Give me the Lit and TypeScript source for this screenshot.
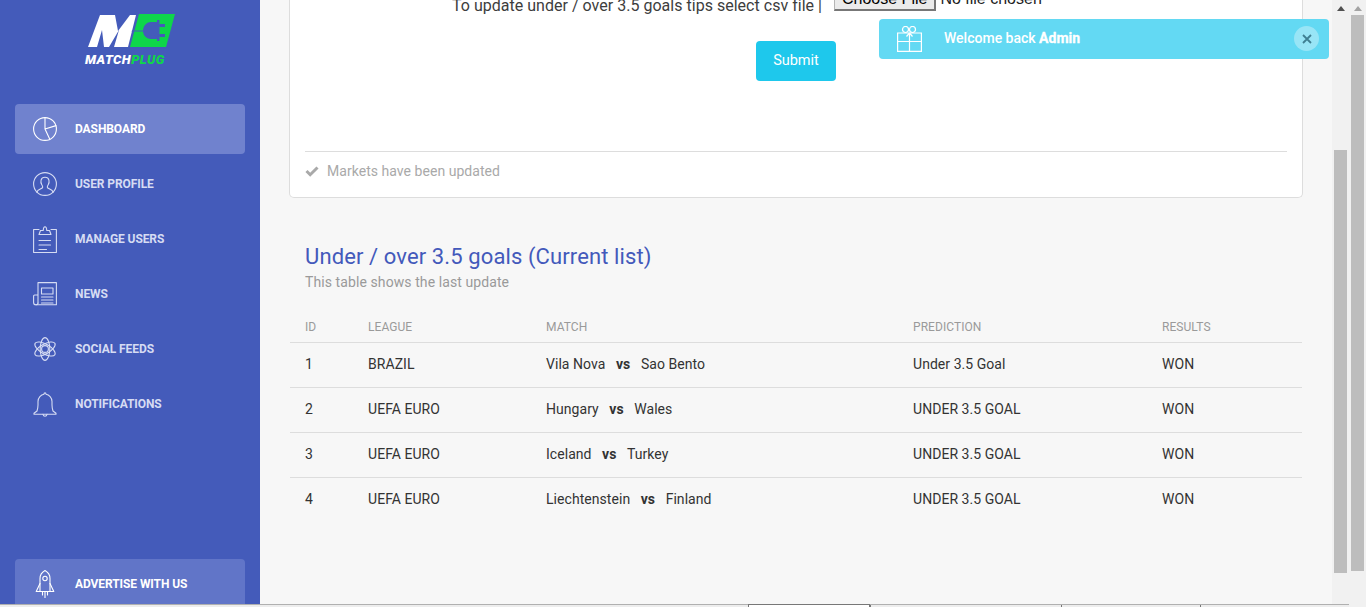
import { LitElement, html, css, svg } from "lit";
import { customElement } from "lit/decorators.js";

const s = (body: unknown, h = 24) => html`<svg class="ico" viewBox="0 0 24 ${h}" height=${h} fill="none" stroke="currentColor" stroke-width="1.1" stroke-linejoin="round" stroke-linecap="round">${body}</svg>`;

const ICONS: Record<string, unknown> = {
  pie: s(svg`<circle cx="12" cy="12" r="11.400"/><path d="M12 .6V12l4.800 10.200M12 12l11-3.400"/>`),
  user: s(svg`<circle cx="12" cy="12" r="11.400"/><path d="M3.800 20.200c1-2.800 4.400-3 5.800-4.600.3-.9 0-1.600-.8-2.800-1.500-2.300-1.500-7.500 3.200-7.500s4.700 5.200 3.200 7.500c-.8 1.200-1.100 1.900-.8 2.800 1.400 1.600 4.800 1.800 5.800 4.600"/>`),
  clip: s(svg`<path d="M6 3.500H.6v23h22.800v-23H18"/><path d="M6 8.500l1.500-4h2.700c.3-5 3.300-5 3.600 0h2.700l1.500 4z"/><path d="M6 14.500h11.500M6 19h11.500M6 23.500h7.500"/>`, 27),
  news: s(svg`<path d="M5 21V.6h18.400v22.200H2.800C1.200 22.800.6 22 .6 20.500V14c0-.6.4-1 1-1H5"/><path d="M8.500 6h11.500v6H8.500zM8.500 15h11.500M8.500 18h11.500M8.500 21h11.500M5 21c0 1-1 1.800-2.200 1.800"/>`),
  atom: s(svg`<circle cx="12" cy="12" r="3.400"/><ellipse cx="12" cy="12" rx="11.400" ry="4.800" transform="rotate(30 12 12)"/><ellipse cx="12" cy="12" rx="11.400" ry="4.800" transform="rotate(-30 12 12)"/><ellipse cx="12" cy="12" rx="4.800" ry="11.400"/>`),
  bell: s(svg`<path d="M4 19c.6-2 1-3.400 1-6V9.500c0-4 3-6.800 6-7.300 0-1.800 2-1.800 2 0 3 .5 6 3.300 6 7.300V13c0 2.600.4 4 1 6l3 2.300v1H1v-1z"/><path d="M10 22.300c.5 2.500 3.500 2.500 4 0"/>`, 25),
  rocket: s(svg`<path d="M7 21.500V8.500C7 5 9.500 2 12 .6c2.500 1.400 5 4.400 5 7.900v13z"/><circle cx="12" cy="8.500" r="2.200"/><path d="M7 13.500L3.200 21.500H7M17 13.500l3.800 8H17M9.500 22v3M14.500 22v3M12 22v6"/>`, 28),
};

const NAV = [
  { label: "Dashboard", icon: "pie", active: true },
  { label: "User Profile", icon: "user" },
  { label: "Manage Users", icon: "clip" },
  { label: "News", icon: "news" },
  { label: "Social Feeds", icon: "atom" },
  { label: "Notifications", icon: "bell" },
];

const ROWS = [
  ["1", "BRAZIL", "Vila Nova", "Sao Bento", "Under 3.5 Goal", "WON"],
  ["2", "UEFA EURO", "Hungary", "Wales", "UNDER 3.5 GOAL", "WON"],
  ["3", "UEFA EURO", "Iceland", "Turkey", "UNDER 3.5 GOAL", "WON"],
  ["4", "UEFA EURO", "Liechtenstein", "Finland", "UNDER 3.5 GOAL", "WON"],
];

@customElement("app-root")
export class AppRoot extends LitElement {
  static styles = css`
    :host { display: block; width: 1366px; height: 607px; overflow: hidden; position: relative; font-family: Roboto, "Liberation Sans", sans-serif; background: #ededed; }
    * { box-sizing: border-box; }
    .frame { display: flex; height: 607px; }
    .left { width: 1349px; height: 607px; display: flex; flex-direction: column; }
    .view { display: flex; height: 604px; flex: none; overflow: hidden; }
    .sidebar { width: 260px; flex: none; background: #445bba; padding: 14px 15px 0; display: flex; flex-direction: column; overflow: hidden; }
    .logo { display: block; height: 52px; margin-left: 70px; }
    .logo svg { display: block; width: 90px; height: 33px; }
    .logo span { display: block; margin-top: 6px; font: italic 900 13px/14px Roboto, sans-serif; letter-spacing: 0.45px; color: #fff; }
    .logo span b { color: #0fd64a; font-weight: 900; }
    nav { margin-top: 38px; display: flex; flex-direction: column; gap: 5px; flex: 1; }
    .item { height: 50px; display: flex; align-items: center; gap: 18px; padding-left: 18px; border-radius: 4px; color: #d6dcf3; font-size: 12px; font-weight: 700; letter-spacing: -0.08px; text-transform: uppercase; flex: none; }
    .item.active { background: #7082ce; color: #fff; }
    .item.ad { background: #6175c8; color: #fff; margin-top: auto; margin-bottom: -5px; }
    .ico { width: 24px; flex: none; display: block; }
    .main { flex: 1; background: #f7f7f7; overflow: hidden; min-width: 0; }
    .inner { margin-top: -21px; padding: 0 30px; }
    .card { width: 1014px; margin-left: -1px; background: #fff; border: 1px solid #ddd; border-top: 0; border-radius: 0 0 5px 5px; padding: 9px 15px 0; height: 219px; display: flex; flex-direction: column; }
    .upload { font-size: 16px; color: #3d3d3d; text-align: center; line-height: 19px; height: 19px; white-space: nowrap; letter-spacing: 0.02px; }
    .upload input { font: 16px "Liberation Sans", Arial, sans-serif; margin-left: 8px; vertical-align: 7px; width: 306px; color: #222; letter-spacing: 0; }
    .upload input::file-selector-button { border-style: solid; border-width: 1px 2px 2px 1px; border-color: #b5b5b5 #777 #777 #b5b5b5; background: #ebebeb; border-radius: 0; padding: 1px 7px; margin-right: 4px; font: inherit; }
    .submit-wrap { display: flex; justify-content: center; margin-top: 34px; }
    .submit { width: 80px; height: 40px; border: 0; border-radius: 4px; background: #1ec8ec; color: #fff; font: 400 14.5px Roboto, sans-serif; padding: 0 0 2px; }
    .foot { margin-top: 70px; border-top: 1px solid #ddd; padding-top: 9px; color: #a9a9a9; font-size: 14px; line-height: 20px; display: flex; align-items: center; gap: 8px; letter-spacing: 0.04px; }
    .foot svg { width: 14px; height: 14px; display: block; }
    .head { padding: 45px 0 0 15px; }
    h2 { margin: 0; font-size: 22px; font-weight: 400; line-height: 28px; color: #4359bb; letter-spacing: 0.11px; }
    .sub { margin: 1px 0 0; font-size: 14px; line-height: 20px; color: #9a9a9a; letter-spacing: 0.09px; }
    table { width: 1012px; margin-top: 16px; border-collapse: collapse; table-layout: fixed; font-size: 14px; color: #333; letter-spacing: 0.05px; }
    th { font-size: 12px; font-weight: 400; text-transform: uppercase; color: #9a9a9a; text-align: left; padding: 4px 0 0 15px; height: 34px; border-bottom: 1px solid #ddd; line-height: 14px; letter-spacing: 0.06px; }
    td { padding: 0 0 2px 15px; height: 45px; border-bottom: 1px solid #ddd; }
    tr:last-child td { border-bottom: 0; }
    td b { font-weight: 700; margin: 0 7px; }
    .bar { width: 17px; flex: none; background: #f1f1f1; display: flex; flex-direction: column; align-items: center; }
    .bar.outer { height: 607px; }
    .arrow { width: 0; height: 0; border: 4px solid transparent; border-top: 0; border-bottom: 5px solid #505050; margin-top: 6px; flex: none; }
    .arrow.dim { border-bottom-color: #a3a3a3; }
    .thumb { width: 13px; margin-top: 139px; height: 423px; background: #bdbdbd; flex: none; }
    .outer .thumb { margin-top: 4px; height: 556px; }
    .status { height: 3px; flex: none; background: #ededed; display: flex; padding-left: 748px; border-top: 1px solid #b0b0b0; }
    .tab { height: 2px; flex: none; border-left: 1px solid #777; }
    .tab.first { width: 122px; background: #fff; border-right: 1px solid #777; border-top: 1px solid #777; margin-top: -1px; height: 3px; }
    .tab.b { width: 191px; }
    .tab.c { width: 139px; }
    .toast { position: absolute; left: 879px; top: 19px; width: 450px; height: 40px; border-radius: 4px; background: #63d9f3; color: #fff; display: flex; align-items: center; font-size: 14px; font-weight: 500; padding-left: 18px; }
    .toast .gift { width: 25px; height: 26px; display: block; flex: none; margin-right: 22px; }
    .toast span { margin-top: -2px; }
    .toast b { font-weight: 700; -webkit-text-stroke: 0.3px #fff; }
    .close { position: absolute; left: 415px; top: 7px; width: 25px; height: 25px; border-radius: 50%; background: #98e5f6; display: flex; align-items: center; justify-content: center; }
    .close svg { width: 10px; height: 10px; display: block; }
  `;

  render() {
    return html`
      <div class="frame">
        <div class="left">
          <div class="view">
            <aside class="sidebar">
              <div class="logo">
                <svg viewBox="0 0 90 33">
                  <polygon fill="#fff" points="3,33 15,1 30,1 33,17 45,1 51,1 43,33 29,33 34,16 24,33 19,33 17,16 12,33"/>
                  <polygon fill="#0fd64a" points="54,0 90,0 81,33 45,33"/>
                  <path fill="#445bba" d="M47 16.500h11c.3-4 3-8.500 8-8.500h6V6h2.500v4H80v3h-5.500v7H80v3h-5.500v4H72v-2h-6c-5 0-7.700-4-8-7.500H46.500z"/>
                </svg>
                <span>MATCH<b>PLUG</b></span>
              </div>
              <nav>
                ${NAV.map((n) => html`<div class="item ${n.active ? "active" : ""}">${ICONS[n.icon]}<span>${n.label}</span></div>`)}
                <div class="item ad">${ICONS.rocket}<span>Advertise with us</span></div>
              </nav>
            </aside>
            <main class="main">
              <div class="inner">
                <section class="card">
                  <div class="upload">To update under / over 3.5 goals tips select csv file | <input type="file" /></div>
                  <div class="submit-wrap"><button class="submit">Submit</button></div>
                  <div class="foot">
                    <svg viewBox="0 0 14 14"><path fill="none" stroke="#a9a9a9" stroke-width="3" d="M1.500 7l3.700 3.700L12.500 3.500"/></svg>
                    <span>Markets have been updated</span>
                  </div>
                </section>
                <div class="head">
                  <h2>Under / over 3.5 goals (Current list)</h2>
                  <p class="sub">This table shows the last update</p>
                </div>
                <table>
                  <colgroup><col style="width:63px" /><col style="width:178px" /><col style="width:367px" /><col style="width:249px" /><col /></colgroup>
                  <thead><tr><th>ID</th><th>League</th><th>Match</th><th>Prediction</th><th>Results</th></tr></thead>
                  <tbody>
                    ${ROWS.map((r) => html`<tr><td>${r[0]}</td><td>${r[1]}</td><td>${r[2]}<b>&nbsp;vs&nbsp;</b>${r[3]}</td><td>${r[4]}</td><td>${r[5]}</td></tr>`)}
                  </tbody>
                </table>
              </div>
            </main>
            <div class="bar"><div class="arrow"></div><div class="thumb"></div></div>
          </div>
          <div class="status"><div class="tab first"></div><div class="tab b"></div><div class="tab c"></div><div class="tab"></div></div>
        </div>
        <div class="bar outer"><div class="arrow dim"></div><div class="thumb"></div></div>
      </div>
      <div class="toast">
        <svg class="gift" viewBox="0 0 25 26" fill="none" stroke="#fff" stroke-width="1.200"><path d="M.6 7h23.800v18.400H.6zM12.500 7v18.400M.6 15.500h23.800"/><circle cx="8.500" cy="3.500" r="3"/><circle cx="15.500" cy="3.500" r="3"/><path d="M12.500 7l-3 3.500M12.500 7l3 3.500"/></svg>
        <span>Welcome back <b>Admin</b></span>
        <div class="close"><svg viewBox="0 0 10 10"><path d="M1 1l8 8M9 1l-8 8" stroke="#3f7f92" stroke-width="1.800" fill="none"/></svg></div>
      </div>
    `;
  }
}
